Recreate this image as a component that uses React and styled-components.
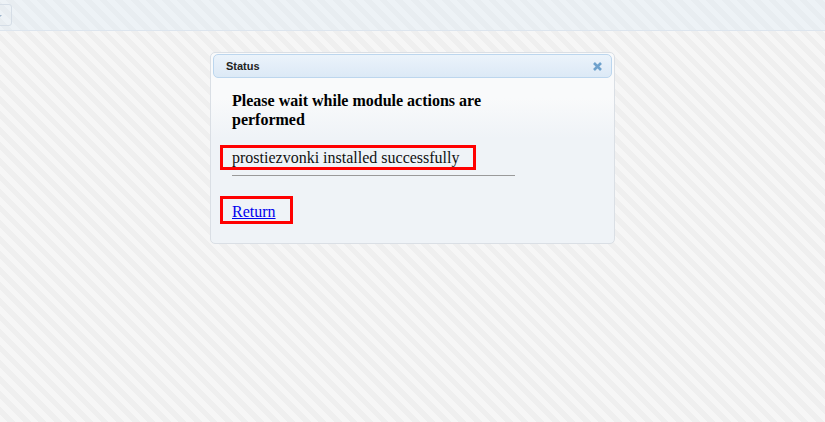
import React from "react";
import styled, { createGlobalStyle } from "styled-components";

const Global = createGlobalStyle`
  html, body { margin: 0; padding: 0; }
  body {
    min-height: 422px;
    background: repeating-linear-gradient(45deg, #f6f6f6 0 5.5px, #efefef 5.5px 11px);
    font-family: "Liberation Serif", "Times New Roman", serif;
  }
`;

const TopBar = styled.div`
  height: 30px;
  border-bottom: 1px solid #dde5ee;
  background: rgba(222, 234, 246, 0.35);
  display: flex;
  align-items: center;
`;

const TabButton = styled.div`
  margin-left: -20px;
  width: 32px;
  height: 22px;
  box-sizing: border-box;
  border: 1px solid #d6dee7;
  border-radius: 3px;
  display: flex;
  align-items: center;
  justify-content: flex-end;
  padding-right: 9px;
`;

const Arrow = styled.span`
  width: 0;
  height: 0;
  border-left: 3px solid transparent;
  border-right: 3px solid transparent;
  border-top: 3px solid #9fb6cc;
  margin-top: 2px;
`;

const Dialog = styled.div`
  width: 405px;
  box-sizing: border-box;
  margin: 21px auto 0;
  border: 1px solid #dadfe5;
  border-radius: 5px;
  padding: 1px 2px 19px;
  background: linear-gradient(#f9fafb 0, #f9fafb 45px, #eff3f7 85px, #eff3f7 100%);
`;

const TitleBar = styled.div`
  height: 24px;
  box-sizing: border-box;
  border: 1px solid #bcd6ee;
  border-radius: 5px;
  background: linear-gradient(#ebf3fb, #dce9f6);
  display: flex;
  align-items: center;
  justify-content: space-between;
  padding: 0 8px 0 12px;
`;

const Title = styled.span`
  font-family: "Liberation Sans", Arial, sans-serif;
  font-weight: bold;
  font-size: 11px;
  color: #222;
`;

const Close = styled.svg`
  width: 11px;
  height: 11px;
  display: block;
`;

const Content = styled.div`
  padding: 14px 0 0 19px;
`;

const Heading = styled.div`
  width: 283px;
  font-weight: bold;
  font-size: 16px;
  line-height: 18.5px;
  color: #000;
`;

const Marked = styled.span`
  display: inline-block;
  box-sizing: border-box;
  margin-left: -12px;
  border: 3px solid #ff0000;
  height: ${(p) => p.$h}px;
  padding: ${(p) => p.$pad};
  font-size: 16px;
  line-height: 19px;
  color: #111;
`;

const StatusRow = styled.div`
  margin-top: 16px;
  line-height: 0;
`;

const Rule = styled.div`
  width: 283px;
  height: 1px;
  background: #9a9a9a;
  margin-top: 5px;
`;

const ReturnRow = styled.div`
  margin-top: 20px;
  line-height: 0;
`;

const Link = styled.a`
  color: #0000ee;
  text-decoration: underline;
`;

export default function App() {
  return (
    <>
      <Global />
      <TopBar>
        <TabButton>
          <Arrow />
        </TabButton>
      </TopBar>
      <Dialog>
        <TitleBar>
          <Title>Status</Title>
          <Close viewBox="0 0 11 11">
            <path d="M2 2 L9 9 M9 2 L2 9" stroke="#6fa1cc" strokeWidth="2.6" strokeLinecap="butt" />
          </Close>
        </TitleBar>
        <Content>
          <Heading>Please wait while module actions are performed</Heading>
          <StatusRow>
            <Marked $h={25} $pad="0 13px 0 9px">prostiezvonki installed successfully</Marked>
          </StatusRow>
          <Rule />
          <ReturnRow>
            <Marked $h={28} $pad="3px 14px 0 9px">
              <Link href="#">Return</Link>
            </Marked>
          </ReturnRow>
        </Content>
      </Dialog>
    </>
  );
}
